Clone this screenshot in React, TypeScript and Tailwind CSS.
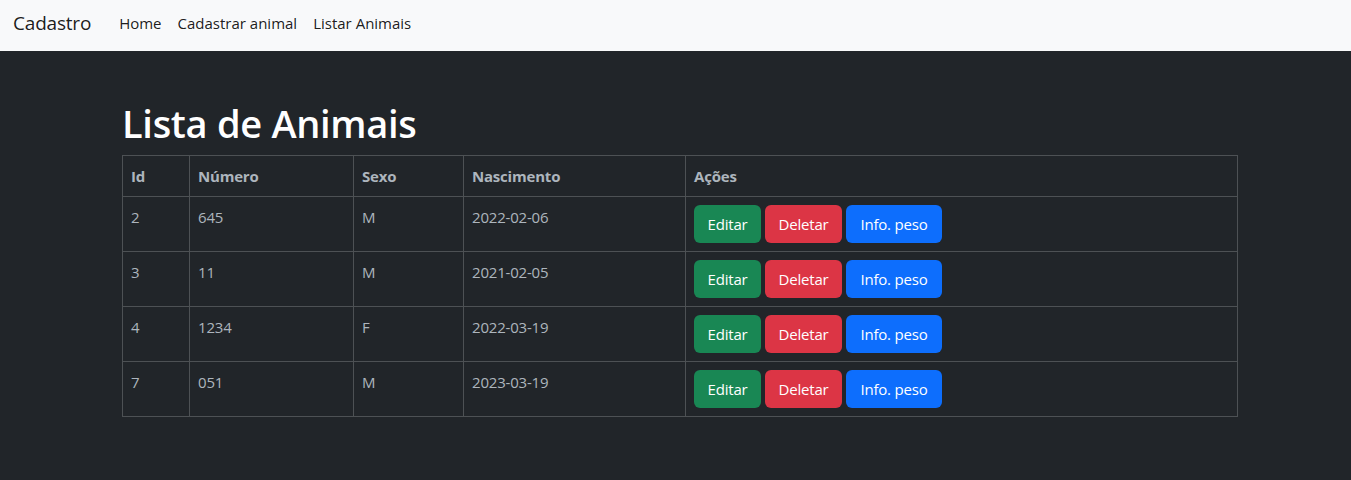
import React from 'react';

type Animal = { id: number; numero: string; sexo: string; nascimento: string };

const animais: Animal[] = [
  { id: 2, numero: '645', sexo: 'M', nascimento: '2022-02-06' },
  { id: 3, numero: '11', sexo: 'M', nascimento: '2021-02-05' },
  { id: 4, numero: '1234', sexo: 'F', nascimento: '2022-03-19' },
  { id: 7, numero: '051', sexo: 'M', nascimento: '2023-03-19' },
];

const FONT = { fontFamily: '"Open Sans", "Noto Sans", "Liberation Sans", sans-serif' };

export default function App() {
  return (
    <div className="min-h-[480px] bg-[#212529]" style={FONT}>
      {/* Navbar */}
      <nav className="h-[51px] bg-[#f8f9fa] flex items-center pl-[13px] pb-[4px]">
        <span className="text-[19px] text-black/90 mr-[28px] tracking-[-0.2px]">Cadastro</span>
        <div className="flex gap-[16px] text-[15px] text-black/90">
          <a>Home</a>
          <a>Cadastrar animal</a>
          <a>Listar Animais</a>
        </div>
      </nav>

      {/* Content */}
      <div className="pl-[122px] pt-[48px]">
        <h1 className="text-[38px] leading-[48px] font-semibold text-white mb-[8px] tracking-[-0.3px]">
          Lista de Animais
        </h1>
        <table className="w-[1116px] border-collapse text-[15px] text-[#adb5bd] tracking-[-0.2px]">
          <thead>
            <tr className="text-left">
              <th className="w-[67px] border border-[#4d5154] px-[8px] py-[8px] leading-[24px] font-bold">Id</th>
              <th className="w-[164px] border border-[#4d5154] px-[8px] py-[8px] leading-[24px] font-bold">Número</th>
              <th className="w-[110px] border border-[#4d5154] px-[8px] py-[8px] leading-[24px] font-bold">Sexo</th>
              <th className="w-[222px] border border-[#4d5154] px-[8px] py-[8px] leading-[24px] font-bold">Nascimento</th>
              <th className="border border-[#4d5154] px-[8px] py-[8px] leading-[24px] font-bold">Ações</th>
            </tr>
          </thead>
          <tbody>
            {animais.map((a) => (
              <tr key={a.id} className="align-top">
                <td className="border border-[#4d5154] px-[8px] py-[8px] leading-[24px]">{a.id}</td>
                <td className="border border-[#4d5154] px-[8px] py-[8px] leading-[24px]">{a.numero}</td>
                <td className="border border-[#4d5154] px-[8px] py-[8px] leading-[24px]">{a.sexo}</td>
                <td className="border border-[#4d5154] px-[8px] py-[8px] leading-[24px]">{a.nascimento}</td>
                <td className="border border-[#4d5154] px-[8px] py-[8px]">
                  <div className="flex gap-[4px] text-white text-[15px]">
                    <button className="h-[38px] w-[67px] rounded-[6px] bg-[#198754]">Editar</button>
                    <button className="h-[38px] w-[77px] rounded-[6px] bg-[#dc3545]">Deletar</button>
                    <button className="h-[38px] w-[96px] rounded-[6px] bg-[#0d6efd]">Info. peso</button>
                  </div>
                </td>
              </tr>
            ))}
          </tbody>
        </table>
      </div>
    </div>
  );
}
